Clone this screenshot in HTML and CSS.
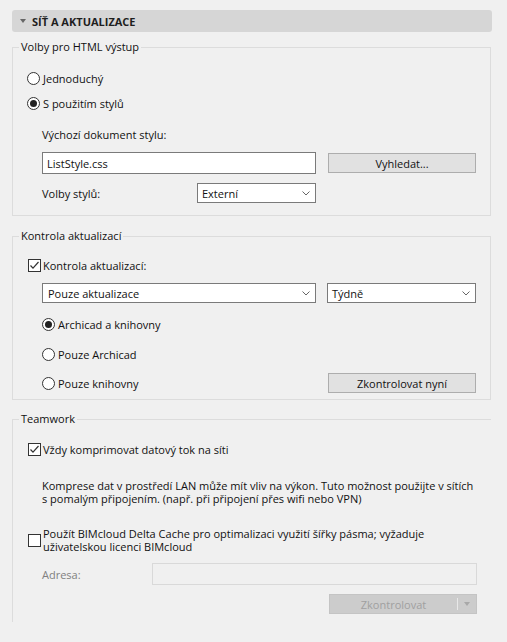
FILE: index.html
```html
<!DOCTYPE html>
<html lang="cs">

<head>
    <meta charset="UTF-8">
    <meta name="viewport" content="width=device-width, initial-scale=1.0">
    <link rel="stylesheet" href="styles.css">
    <title>Síť a aktualizace</title>
</head>

<body>

    <div class="wrapper">
        <div class="section_head">
            <span class="arrow"></span>
            <span class="head_text">SÍŤ A AKTUALIZACE</span>
        </div>

        <div class="scroll">

            <!-- html output -->
            <fieldset class="group">
                <legend>Volby pro HTML výstup</legend>
                <div class="group_body body_html">
                    <div class="row r_simple">
                        <span class="radio"></span>
                        <span class="label">Jednoduchý</span>
                    </div>
                    <div class="row r_styled">
                        <span class="radio checked"></span>
                        <span class="label">S použitím stylů</span>
                    </div>
                    <div class="row indent r_doc">
                        <span>Výchozí dokument stylu:</span>
                    </div>
                    <div class="row indent r_file">
                        <div class="input wide">ListStyle.css</div>
                        <button class="btn">Vyhledat...</button>
                    </div>
                    <div class="row indent r_opts">
                        <span class="opts_label">Volby stylů:</span>
                        <div class="select small">
                            <span>Externí</span>
                            <svg class="chevron" width="8" height="5" viewBox="0 0 8 5"><polyline points="0.5,0.5 4,4 7.5,0.5" /></svg>
                        </div>
                    </div>
                </div>
            </fieldset>

            <!-- updates -->
            <fieldset class="group group_updates">
                <legend>Kontrola aktualizací</legend>
                <div class="group_body body_updates">
                    <div class="row u_check">
                        <span class="checkbox">
                            <svg width="13" height="13" viewBox="0 0 13 13"><polyline points="2.5,6.5 5,9.2 10.5,3" /></svg>
                        </span>
                        <span class="label">Kontrola aktualizací:</span>
                    </div>
                    <div class="row indent u_selects">
                        <div class="select wide">
                            <span>Pouze aktualizace</span>
                            <svg class="chevron" width="8" height="5" viewBox="0 0 8 5"><polyline points="0.5,0.5 4,4 7.5,0.5" /></svg>
                        </div>
                        <div class="select period">
                            <span>Týdně</span>
                            <svg class="chevron" width="8" height="5" viewBox="0 0 8 5"><polyline points="0.5,0.5 4,4 7.5,0.5" /></svg>
                        </div>
                    </div>
                    <div class="row indent u_r1">
                        <span class="radio checked"></span>
                        <span class="label">Archicad a knihovny</span>
                    </div>
                    <div class="row indent u_r2">
                        <span class="radio"></span>
                        <span class="label">Pouze Archicad</span>
                    </div>
                    <div class="row indent u_r3">
                        <span class="radio"></span>
                        <span class="label">Pouze knihovny</span>
                        <button class="btn push">Zkontrolovat nyní</button>
                    </div>
                </div>
            </fieldset>

            <!-- teamwork -->
            <fieldset class="group group_team">
                <legend>Teamwork</legend>
                <div class="group_body body_team">
                    <div class="row t_check">
                        <span class="checkbox">
                            <svg width="13" height="13" viewBox="0 0 13 13"><polyline points="2.5,6.5 5,9.2 10.5,3" /></svg>
                        </span>
                        <span class="label">Vždy komprimovat datový tok na síti</span>
                    </div>
                    <p class="note indent">Komprese dat v prostředí LAN může mít vliv na výkon. Tuto možnost použijte v sítích<br>s pomalým připojením. (např. při připojení přes wifi nebo VPN)</p>
                    <div class="row t_cache">
                        <span class="checkbox"></span>
                        <span class="label">Použít BIMcloud Delta Cache pro optimalizaci využití šířky pásma; vyžaduje<br>uživatelskou licenci BIMcloud</span>
                    </div>
                    <div class="row indent t_addr">
                        <span class="addr_label">Adresa:</span>
                        <div class="input disabled"></div>
                    </div>
                    <div class="row t_btn">
                        <div class="split push">
                            <span class="split_text">Zkontrolovat</span>
                            <span class="split_line"></span>
                            <span class="split_arrow"></span>
                        </div>
                    </div>
                </div>
            </fieldset>

        </div>
    </div>

</body>

</html>
```

FILE: styles.css
```css
* {
    margin: 0px;
    padding: 0px;
    box-sizing: border-box;
}

body {
    background: #f0f0f0;
    font-family: "Open Sans", "Noto Sans", sans-serif;
    font-size: 11px;
    color: #111111;
}

.wrapper {
    padding: 10px 0px 0px 12px;
}

.section_head {
    width: 480px;
    height: 22px;
    background: #d6d6d6;
    border-radius: 3px;
    display: flex;
    align-items: center;
    gap: 6px;
    padding-left: 8px;
}

.arrow {
    width: 0px;
    height: 0px;
    border-left: 3px solid transparent;
    border-right: 3px solid transparent;
    border-top: 4px solid #666666;
}

.head_text {
    font-weight: 700;
    color: #1e1e1e;
}

.scroll {
    width: 479px;
    height: 582px;
    margin-top: 8px;
    overflow: hidden;
}

.group {
    border: 1px solid #dcdcdc;
    padding: 0px;
}

.group legend {
    margin-left: 6px;
    padding: 0px 2px;
    line-height: 14px;
}

.group_updates {
    margin-top: 13px;
}

.group_team {
    margin-top: 12px;
}

.group_body {
    display: flex;
    flex-direction: column;
    padding: 0px 14px 0px 14px;
}

.body_html {
    padding-bottom: 12px;
}

.body_updates {
    padding-bottom: 6px;
}

.body_team {
    padding-bottom: 40px;
}

.row {
    height: 20px;
    display: flex;
    align-items: center;
}

.indent {
    margin-left: 15px;
}

/* rows of the html group */
.r_simple { margin-top: 14px; }
.r_styled { margin-top: 5px; }
.r_doc { margin-top: 11px; }
.r_file { margin-top: 8px; height: 22px; gap: 12px; }
.r_opts { margin-top: 9px; }

/* rows of the updates group */
.u_check { margin-top: 12px; }
.u_selects { margin-top: 8px; gap: 11px; }
.u_r1 { margin-top: 11px; }
.u_r2 { margin-top: 10px; }
.u_r3 { margin-top: 9px; }

/* rows of the teamwork group */
.t_check { margin-top: 13px; }
.t_cache { margin-top: 22px; height: 26px; }
.t_addr { margin-top: 10px; height: 22px; }
.t_btn { margin-top: 9px; }

.radio {
    width: 13px;
    height: 13px;
    border: 1px solid #333333;
    border-radius: 50%;
    background: #ffffff;
    display: flex;
    align-items: center;
    justify-content: center;
    flex-shrink: 0;
}

.radio.checked::after {
    content: "";
    width: 7px;
    height: 7px;
    border-radius: 50%;
    background: #222222;
}

.checkbox {
    width: 13px;
    height: 13px;
    margin-left: 1px;
    border: 1px solid #333333;
    background: #ffffff;
    flex-shrink: 0;
    display: flex;
}

.checkbox svg {
    margin: -1px;
}

.checkbox polyline {
    fill: none;
    stroke: #333333;
    stroke-width: 1.2;
}

.label {
    margin-left: 3px;
}

.t_check .label,
.u_check .label,
.t_cache .label {
    margin-left: 2px;
}

.t_cache .label {
    line-height: 13px;
}

.input {
    height: 22px;
    border: 1px solid #7a7a7a;
    background: #ffffff;
    display: flex;
    align-items: center;
    padding-left: 4px;
}

.input.wide {
    width: 274px;
}

.input.disabled {
    width: 325px;
    margin-left: 63px;
    border-color: #d9d9d9;
    background: #f0f0f0;
}

.btn {
    width: 148px;
    height: 20px;
    border: 1px solid #adadad;
    background: #e1e1e1;
    font-family: inherit;
    font-size: 11px;
    color: #111111;
}

.push {
    margin-left: auto;
}

.select {
    height: 20px;
    border: 1px solid #7a7a7a;
    background: #ffffff;
    display: flex;
    align-items: center;
    justify-content: space-between;
    padding: 0px 5px 0px 4px;
}

.select.wide {
    width: 274px;
    padding-left: 5px;
}

.select.small {
    width: 119px;
}

.select.period {
    width: 149px;
}

.chevron polyline {
    fill: none;
    stroke: #666666;
    stroke-width: 1;
}

.opts_label {
    width: 155px;
}

.note {
    margin-top: 20px;
    line-height: 13px;
}

.addr_label {
    width: 47px;
    color: #808080;
}

.split {
    width: 148px;
    height: 20px;
    border: 1px solid #c4c4c4;
    background: #cccccc;
    display: flex;
    align-items: center;
}

.split_text {
    width: 127px;
    text-align: center;
    color: #a0a0a0;
}

.split_line {
    width: 1px;
    height: 12px;
    background: #e8e8e8;
}

.split_arrow {
    margin-left: 6px;
    width: 0px;
    height: 0px;
    border-left: 3.5px solid transparent;
    border-right: 3.5px solid transparent;
    border-top: 4px solid #a8a8a8;
}
```
